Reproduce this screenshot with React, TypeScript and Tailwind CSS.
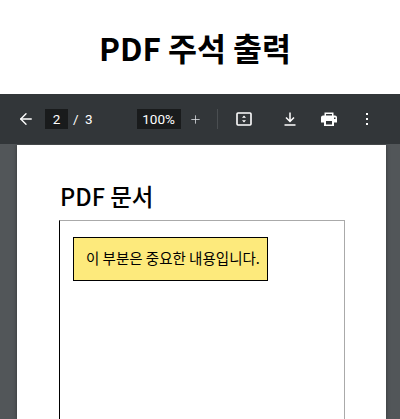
import { ArrowLeft, Plus } from 'lucide-react'

const sans = { fontFamily: '"Noto Sans CJK KR", "Noto Sans", sans-serif' }
const roboto = { fontFamily: 'Roboto, sans-serif' }

function FitIcon() {
  return (
    <svg width="16" height="14" viewBox="0 0 16 14" fill="none" aria-hidden="true">
      <rect x="1" y="1" width="14" height="12" rx="1" stroke="white" strokeWidth="1.6" />
      <path d="M8 3.5 10 5.8H6Z M8 10.5 6 8.2H10Z" fill="white" />
    </svg>
  )
}

function DownloadIcon() {
  return (
    <svg width="12" height="14" viewBox="0 0 12 14" fill="none" aria-hidden="true">
      <path d="M6 0.5V9M2 5.5 6 9.5 10 5.5" stroke="white" strokeWidth="1.5" />
      <path d="M0.5 13H11.5" stroke="white" strokeWidth="1.5" />
    </svg>
  )
}

function PrintIcon() {
  return (
    <svg width="16" height="14" viewBox="0 0 16 14" aria-hidden="true">
      <path
        fill="white"
        fillRule="evenodd"
        d="M3.5 0.5H12.5V3.5H14C15 3.5 16 4.4 16 5.5V10.5H13V14H3V10.5H0V5.5C0 4.4 1 3.5 2 3.5H3.5ZM5 2V3.5H11V2ZM5 9V12.5H11V9ZM13 5.5V7H14.5V5.5Z"
      />
    </svg>
  )
}

function Toolbar() {
  return (
    <div className="flex h-[50px] items-center bg-[#323639] text-white">
      <ArrowLeft className="ml-[17px] h-[18px] w-[18px]" strokeWidth={1.8} />
      <span className="ml-[10px] flex h-[20px] w-[23px] items-center justify-center bg-[#191b1c] text-[13.5px]" style={roboto}>
        2
      </span>
      <span className="ml-[5px] w-[8px] text-[13.5px]" style={roboto}>/</span>
      <span className="ml-[4px] text-[13.5px]" style={roboto}>3</span>
      <span className="ml-[44px] flex h-[20px] w-[44px] items-center justify-center bg-[#191b1c] text-[13.5px]" style={roboto}>
        100%
      </span>
      <Plus className="ml-[8px] h-[13px] w-[13px] text-gray-200" strokeWidth={1.4} />
      <div className="ml-[15px] h-[20px] w-px bg-[#4a4e51]" />
      <div className="ml-[18px] flex"><FitIcon /></div>
      <div className="ml-[32px] flex"><DownloadIcon /></div>
      <div className="ml-[25px] flex"><PrintIcon /></div>
      <div className="ml-[29px] flex flex-col gap-[3px]">
        <span className="h-[2px] w-[2px] bg-white" />
        <span className="h-[2px] w-[2px] bg-white" />
        <span className="h-[2px] w-[2px] bg-white" />
      </div>
    </div>
  )
}

export default function App() {
  return (
    <div className="flex h-[419px] w-[400px] flex-col overflow-hidden bg-white" style={sans}>
      <div className="flex h-[94px] shrink-0 items-center justify-center pr-[10px] pt-[2px]">
        <h1 className="text-[31.5px] font-bold leading-none text-black">PDF 주석 출력</h1>
      </div>
      <Toolbar />
      <div className="flex-1 overflow-hidden bg-[#525659] pl-[17px] pt-px">
        <div className="h-full w-[369px] bg-white pl-[42px] pr-[41px] pt-[37px] shadow-[0_0_4px_rgba(0,0,0,0.4)]">
          <h2 className="ml-px h-[38px] text-[23.5px] font-medium leading-[28px] text-black">PDF 문서</h2>
          <div className="h-[300px] border border-l-black border-[#aaaaaa] pl-[13px] pt-[16px]">
            <div className="flex h-[44px] w-[195px] items-center border border-black bg-[#fdea7c] pb-[2px] pl-[12px] text-[14.5px] text-black" style={sans}>
              이 부분은 중요한 내용입니다.
            </div>
          </div>
        </div>
      </div>
    </div>
  )
}
